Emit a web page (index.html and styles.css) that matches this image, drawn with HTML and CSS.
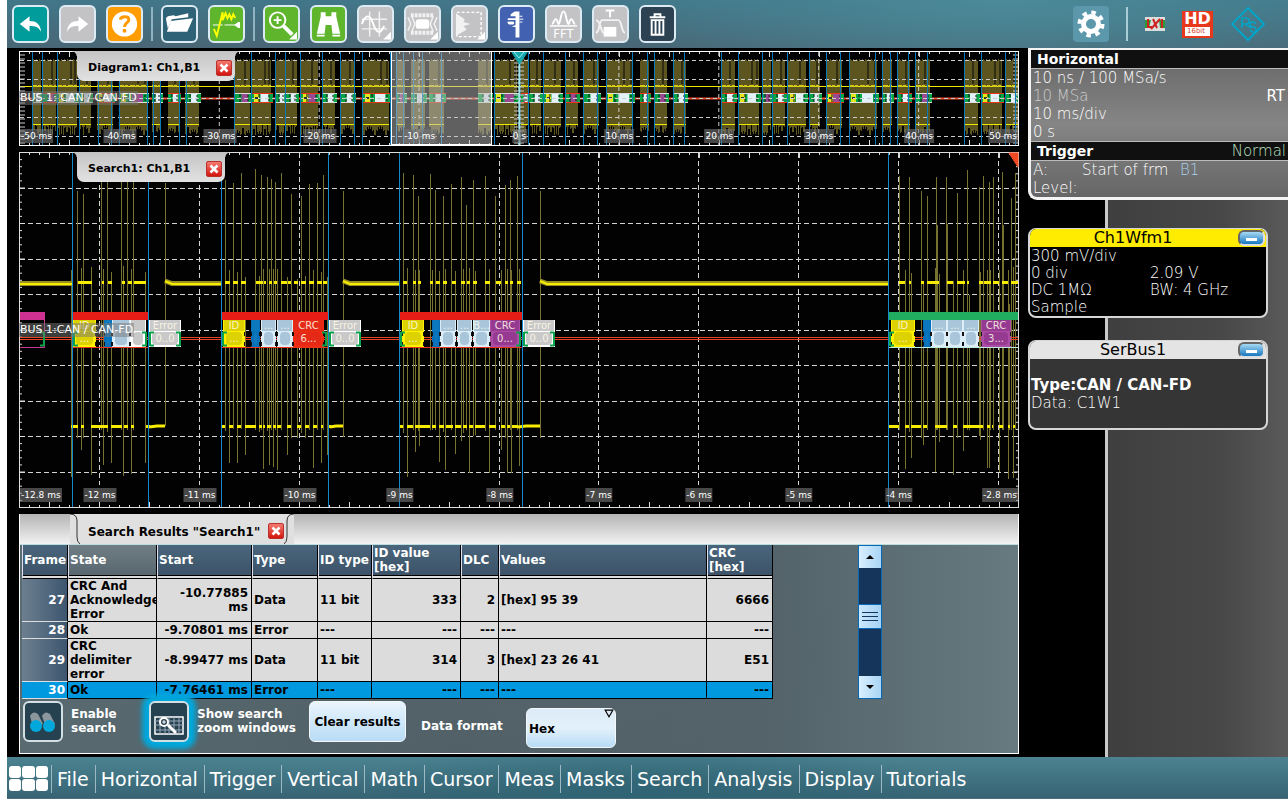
FILE: index.html
```html
<!DOCTYPE html>
<html lang="en">
<head>
<meta charset="utf-8">
<title>Oscilloscope</title>
<link rel="stylesheet" href="styles.css">
</head>
<body>
<div class="app">
  <header class="toolbar">
    <div class="tools">
      <button class="tool teal" aria-label="Undo"><svg viewBox="0 0 34 34"><path d="M6 17 16 9v5c7 0 11 3 12 11-3-5-6-6-12-6v6z" fill="#fff"/></svg></button>
      <button class="tool grey" aria-label="Redo"><svg viewBox="0 0 34 34"><path d="M28 17 18 9v5C11 14 7 17 6 25c3-5 6-6 12-6v6z" fill="#fff"/></svg></button>
      <button class="tool orange" aria-label="Help"><svg viewBox="0 0 34 34"><circle cx="17" cy="17" r="13" fill="#fff"/><path d="M12.500 12.500c1-4 9-4 9 0 0 3-4.500 3.500-4.500 7.500" fill="none" stroke="#f90" stroke-width="3"/><circle cx="17" cy="24" r="2" fill="#f90"/></svg></button>
    </div>
    <span class="sep"></span>
    <div class="tools">
      <button class="tool dark" aria-label="Open"><svg viewBox="0 0 34 34"><path d="M3 11l2-2 6-1 2 1 13-3v4L9 12 5 22z" fill="#fff"/><path d="M8 14 31 11l-6 14H4z" fill="#fff"/></svg></button>
      <button class="tool green" aria-label="Auto set"><svg viewBox="0 0 34 34"><path d="M3 18h10M15 18h11" stroke="#fff" stroke-width="1"/><path d="m25 18 4-3h2v6h-2z" fill="#fff"/><path d="M4 22l3 7 2-8 4-16v8l3-7 2 5 2-4 2 5 2-5 2 4" fill="none" stroke="#ff0" stroke-width="2"/></svg></button>
    </div>
    <span class="sep"></span>
    <div class="tools">
      <button class="tool green" aria-label="Zoom"><svg viewBox="0 0 34 34"><circle cx="13" cy="13" r="8" fill="none" stroke="#fff" stroke-width="2"/><path d="M13 9v8M9 13h8" stroke="#fff" stroke-width="2"/><path d="m19 19 9 9" stroke="#fff" stroke-width="4"/><path d="M33 25v8h-8z" fill="#fff"/></svg></button>
      <button class="tool green" aria-label="Search"><svg viewBox="0 0 34 34"><path d="M9 5h5v4h6V5h5v4l4 18h-8l-1-9h-6l-1 9H5L9 9z" fill="#fff"/><path d="M5 28h8v2H5zM21 28h8v2h-8z" fill="#fff"/></svg></button>
      <button class="tool grey" aria-label="Cursor"><svg viewBox="0 0 34 34"><path d="M11 4v26M21 4v26M3 12h26M3 22h26" stroke="#f2f2f2" stroke-width="1.500"/><path d="M3 17c2-6 5-9 8-7 4 3 4 14 9 15 3 1 4-3 6-6" fill="none" stroke="#fff" stroke-width="2"/><path d="M33 25v8h-8z" fill="#fff"/></svg></button>
      <button class="tool grey" aria-label="Mask"><svg viewBox="0 0 34 34"><path d="M5 8h24M5 26h24" stroke="#f2f2f2" stroke-width="4" stroke-dasharray="3 1"/><path d="M6 9l3 8-3 8M28 9l-3 8 3 8M2 10l3 7-3 7M32 10l-3 7 3 7" fill="none" stroke="#f2f2f2" stroke-width="1.500"/><rect x="10" y="12" width="14" height="10" rx="3" fill="#fff"/><path d="M33 25v8h-8z" fill="#fff"/></svg></button>
      <button class="tool grey" aria-label="Histogram"><svg viewBox="0 0 34 34"><rect x="4" y="5" width="25" height="25" fill="none" stroke="#fff" stroke-width="1.500" stroke-dasharray="3 2"/><path d="M3 6l9 6-1 3 7 2-7 2 3 4-11 6z" fill="#f2f2f2"/><path d="M33 25v8h-8z" fill="#fff"/></svg></button>
      <button class="tool blue" aria-label="Measure"><svg viewBox="0 0 34 34"><path d="M15 4h5v27h-4V20h-4l4-2v-5H8v-2h8V9h-5V7z" fill="#fff"/><path d="M8 15h6v2H9zM20 9h3M20 12h4M20 15h3" stroke="#fff" fill="#fff"/></svg></button>
      <button class="tool grey" aria-label="FFT"><svg viewBox="0 0 34 34"><path d="M3 19h28" stroke="#fff" stroke-width="1.500"/><path d="M5 17c2 0 2-5 4-5s2 5 3 5c2 0 2-13 5-13s3 13 5 13c1 0 1-5 3-5s2 5 4 5" fill="none" stroke="#fff" stroke-width="2"/><text x="17" y="31" text-anchor="middle" class="icon-text">FFT</text></svg></button>
      <button class="tool grey" aria-label="Trigger"><svg viewBox="0 0 34 34"><path d="M2 26c4 0 3-12 6-13h17c4 0 3 13 7 13M2 13c5 0 5 13 8 13" fill="none" stroke="#f2f2f2" stroke-width="2"/><rect x="10" y="20" width="13" height="10" fill="#fff"/><path d="M12 3h9M16.500 3v7" stroke="#fff" stroke-width="2"/></svg></button>
      <button class="tool navy" aria-label="Delete"><svg viewBox="0 0 34 34"><path d="M14 9V7h6v2M9 10h16" stroke="#fff" stroke-width="2" fill="none"/><path d="M11 13h12v15H11zM15 13v15M19 13v15" stroke="#fff" stroke-width="2" fill="none"/></svg></button>
    </div>
    <div class="status">
      <button class="gear" aria-label="Settings"><svg viewBox="0 0 36 36"><circle cx="18" cy="18" r="7.500" fill="none" stroke="#fff" stroke-width="5"/><circle cx="18" cy="18" r="11.500" fill="none" stroke="#fff" stroke-width="4" stroke-dasharray="4.500 4.530"/></svg></button>
      <span class="sep light"></span>
      <svg class="lxi" viewBox="0 0 20 14"><rect width="20" height="14" fill="#ddd"/><path d="M0 3h6l-2 8H0zM14 3h6v8h-5z" fill="#2a9a3c"/><path d="M3 2v8h4M6 12l9-10M8 2l4 9M17 2v9" stroke="#c22" stroke-width="2" fill="none"/></svg>
      <span class="hd"><b>HD</b><small>16bit</small></span>
      <svg class="logo" viewBox="0 0 36 36"><path d="M18 2 34 18 18 34 2 18z" fill="none" stroke="#00a5c8" stroke-width="2"/><path d="M12 22V12h4q3 0 3 3t-3 3h-4m3 0 6 4M26 18q-1-2-3-2-3 0-3 2.500t3 2.500 3 3-3 2-3-2" fill="none" stroke="#00a5c8" stroke-width="1.500"/></svg>
    </div>
  </header>

  <main class="work">
    <section class="stage">
      <div class="plot overview" id="overview">
        <div class="tab">Diagram1: Ch1,B1 <button class="close" aria-label="Close"><svg viewBox="0 0 16 16"><path d="m4 4 8 8M12 4l-8 8"/></svg></button></div>
      </div>
      <div class="plot detail" id="detail">
        <div class="tab">Search1: Ch1,B1 <button class="close" aria-label="Close"><svg viewBox="0 0 16 16"><path d="m4 4 8 8M12 4l-8 8"/></svg></button></div>
      </div>
      <section class="results">
        <div class="strip"><div class="strip-edge"></div>
          <svg class="curve" viewBox="0 0 10 30"><path d="M0 0q7 0 7 7v16q0 5 3 7" class="stroke"/></svg>
          <h2>Search Results "Search1"</h2>
          <button class="close" aria-label="Close"><svg viewBox="0 0 16 16"><path d="m4 4 8 8M12 4l-8 8"/></svg></button>
          <svg class="curve" viewBox="0 0 10 30"><path d="M10 0Q3 0 3 7v16q0 5-3 7" class="stroke"/></svg>
          <div class="strip-edge grow"></div>
        </div>
        <div class="grid">
          <table>
            <colgroup><col class="c46"><col class="c89"><col class="c95"><col class="c66"><col class="c54"><col class="c89"><col class="c38"><col class="c208"><col class="c66"></colgroup>
            <thead><tr><th>Frame</th><th class="sorted">State</th><th>Start</th><th>Type</th><th>ID type</th><th>ID value<br>[hex]</th><th>DLC</th><th>Values</th><th>CRC<br>[hex]</th></tr></thead>
            <tbody>
              <tr class="tall"><th>27</th><td>CRC And Acknowledge Error</td><td class="num">-10.77885 ms</td><td>Data</td><td>11 bit</td><td class="num">333</td><td class="num">2</td><td>[hex] 95 39</td><td class="num">6666</td></tr>
              <tr><th>28</th><td>Ok</td><td class="num">-9.70801 ms</td><td>Error</td><td>---</td><td class="num">---</td><td class="num">---</td><td>---</td><td class="num">---</td></tr>
              <tr class="tall"><th>29</th><td>CRC delimiter error</td><td class="num">-8.99477 ms</td><td>Data</td><td>11 bit</td><td class="num">314</td><td class="num">3</td><td>[hex] 23 26 41</td><td class="num">E51</td></tr>
              <tr class="selected"><th>30</th><td>Ok</td><td class="num">-7.76461 ms</td><td>Error</td><td>---</td><td class="num">---</td><td class="num">---</td><td>---</td><td class="num">---</td></tr>
            </tbody>
          </table>
          <div class="scroll">
            <button aria-label="Scroll up"><svg viewBox="0 0 22 22"><path d="M7 13h8l-4-4z"/></svg></button>
            <div class="track"><div class="thumb"><i></i><i></i><i></i></div></div>
            <button aria-label="Scroll down"><svg viewBox="0 0 22 22"><path d="M7 9h8l-4 4z"/></svg></button>
          </div>
        </div>
        <div class="controls">
          <button class="toggle" id="enable" aria-labelledby="enable-l"><svg viewBox="0 0 36 36"><path d="M5 12q3-6 8-2l5 10-10 3z" fill="#8b979d"/><path d="M17 12q3-6 8-2l5 10-9 3z" fill="#8b979d"/><circle cx="11" cy="22" r="6" fill="#00a8dc"/><circle cx="24" cy="22" r="6" fill="#00a8dc"/></svg></button>
          <label class="l1" id="enable-l" for="enable">Enable<br>search</label>
          <button class="toggle on" id="zoomwin" aria-labelledby="zoom-l"><svg viewBox="0 0 36 36"><path d="M4 13h28v17H4z" fill="none" stroke="#fff" stroke-width="1.500"/><path d="M4 17h28M4 21h28M4 26h28M9 13v17M14 13v17M18 13v17M23 13v17M28 13v17" fill="none" stroke="#9ab"/><circle cx="13" cy="18" r="4" fill="#26414f" stroke="#fff" stroke-width="2"/><path d="M13 16v4M11 18h4" stroke="#fff"/><path d="m17 21 8 8" stroke="#fff" stroke-width="3"/></svg></button>
          <label class="l2" id="zoom-l" for="zoomwin">Show search<br>zoom windows</label>
          <button class="clear">Clear results</button>
          <label class="l3" for="format">Data format</label>
          <span class="pick"><select id="format"><option>Hex</option></select><svg viewBox="0 0 9 9"><path d="M1 1h7l-3.500 6z"/></svg></span>
        </div>
      </section>
    </section>

    <aside class="side">
      <div class="info">
        <h3>Horizontal</h3>
        <div class="lines"><p>10 ns / 100 MSa/s</p><p class="split"><span class="dim">10 MSa</span><span class="bright">RT</span></p><p>10 ms/div</p><p>0 s</p></div>
        <h3>Trigger <span>Normal</span></h3>
        <div class="lines"><p class="trig"><span>A:</span><span>Start of frm</span><span class="source">B1</span></p><p>Level:</p></div>
      </div>
      <div class="card">
        <header class="yellow">Ch1Wfm1 <button class="min" aria-label="Minimize"></button></header>
        <div class="cols"><p>300 mV/div</p><p></p><p>0 div</p><p>2.09 V</p><p>DC 1MΩ</p><p>BW: 4 GHz</p><p>Sample</p></div>
      </div>
      <div class="card serial">
        <header>SerBus1 <button class="min" aria-label="Minimize"></button></header>
        <div class="body"><p class="strong">Type:CAN / CAN-FD</p><p>Data: C1W1</p></div>
      </div>
    </aside>
  </main>

  <nav class="menu">
    <button class="apps" aria-label="Applications"><i></i><i></i><i></i><i></i><i></i><i></i></button>
    <a href="#">File</a><a href="#">Horizontal</a><a href="#">Trigger</a><a href="#">Vertical</a><a href="#">Math</a><a href="#">Cursor</a><a href="#">Meas</a><a href="#">Masks</a><a href="#">Search</a><a href="#">Analysis</a><a href="#">Display</a><a href="#">Tutorials</a>
  </nav>
</div>
<script src="plots.js"></script>
</body>
</html>
```
FILE: styles.css
```css
* { box-sizing: border-box; }
body { margin: 0; background: #fff; font-family: "DejaVu Sans", Verdana, sans-serif; font-size: 12px; line-height: 14px; }
button { font: inherit; padding: 0; margin: 0; border: 0; background: none; cursor: pointer; }
p, h2, h3 { margin: 0; font-weight: inherit; font-size: inherit; }
svg { display: block; }
.app { margin-left: 7px; min-height: calc(100vh - 1px); display: flex; flex-direction: column; background: #000; }

.toolbar { height: 48px; display: flex; align-items: center; gap: 8px; padding: 0 22px 0 5px; background: radial-gradient(ellipse 420px 90px at 78% 0, #4b8a98, transparent), linear-gradient(#417789, #496675); }
.tools { display: flex; gap: 10px; }
.tool { width: 37px; height: 38px; border: 2px solid #dcebf3; border-radius: 6px; }
.tool svg { width: 100%; height: 100%; }
.teal { background: #009c9c; }
.grey { background: #c3c3c5; }
.orange { background: #ff9c00; }
.dark { background: #2e6377; }
.green { background: #5fb52c; }
.blue { background: #4261b0; }
.navy { background: #2c4252; }
.icon-text { font-size: 12px; fill: #fff; }
.sep { width: 2px; height: 34px; background: #8fb3c0; }
.sep.light { background: #a9cdd7; }
.status { margin-left: auto; display: flex; align-items: center; gap: 17px; }
.gear { width: 36px; height: 36px; border-radius: 4px; background: #5c98ab; }
.lxi { width: 20px; height: 14px; }
.hd { width: 31px; height: 27px; padding-top: 1px; background: #e8381c; color: #fff; display: flex; flex-direction: column; align-items: center; gap: 1px; }
.hd b { font-size: 16px; line-height: 14px; }
.hd small { width: 25px; background: #fff; color: #d8452e; font-size: 7px; line-height: 9px; padding-left: 2px; }
.logo { width: 36px; height: 36px; }

.work { flex: 1; display: flex; gap: 9px; }
.stage { flex: 1; min-width: 0; display: flex; flex-direction: column; gap: 6px; padding: 3px 0 3px 12px; }
.plot { position: relative; overflow: hidden; background: #020202; color: #fff; }
.plot > svg { width: 100%; height: 100%; }
.overview { height: 95px; }
.detail { height: 356px; }
.tag { position: absolute; font-size: 9px; line-height: 14px; padding: 0 1px; white-space: pre; }
.tag.axis { background: rgba(120, 120, 120, .6); transform: translateX(-50%); }
.tag.axis.first { transform: none; }
.tag.axis.last { transform: translateX(-100%); }
.tag.bus { font-size: 11px; color: #fff; background: rgba(120, 120, 120, .5); }
.tag.cell { font-size: 10px; line-height: 12px; text-align: center; transform: translateX(-50%); padding: 0; color: #fffbe8; opacity: .85; }
.tab { position: absolute; z-index: 1; left: 58px; top: 0; height: 30px; display: flex; align-items: center; gap: 16px; padding: 4px 3px 0 11px; border-radius: 0 0 7px 7px; background: linear-gradient(#c4c4c4, #e2e2e2); color: #000; font-size: 11px; font-weight: bold; white-space: nowrap; }
.tab::before, .tab::after { content: ""; position: absolute; top: 0; width: 5px; height: 5px; left: -5px; background: radial-gradient(circle at 0 100%, transparent 4px, #c4c4c4 5px); }
.tab::after { left: auto; right: -5px; background: radial-gradient(circle at 100% 100%, transparent 4px, #c4c4c4 5px); }
.close { width: 16px; height: 16px; border: 1px solid #b8322b; border-radius: 2px; background: linear-gradient(#f47a70, #d3150f); }
.close path { fill: none; stroke: #fff; stroke-width: 3; }

.results { flex: 1; display: flex; flex-direction: column; border: solid #fff; border-width: 0 1px 1px; background: radial-gradient(ellipse 330px 160px at 50% 60%, #56646a, transparent), linear-gradient(90deg, #596b71, #4e5e65 45%, #536369 75%, #667a80); }
.strip { height: 31px; display: flex; align-items: stretch; background: #e0e0e0; border-bottom: 1px solid #bdd; }
.strip-edge { width: 50px; background: linear-gradient(#b4b4b4, #f2f2f2); }
.grow { flex: 1; }
.curve { width: 10px; height: 30px; }
.curve .stroke { fill: none; stroke: #333; }
.strip h2 { font-weight: bold; margin: auto 0; padding: 5px 0 0 8px; }
.strip .close { margin: 9px 0 0 8px; }
.grid { display: flex; padding-left: 2px; }
table { width: 751px; table-layout: fixed; border-collapse: separate; border-spacing: 0; font-weight: bold; }
.c46 { width: 46px; } .c89 { width: 89px; } .c95 { width: 95px; } .c66 { width: 66px; } .c54 { width: 54px; } .c38 { width: 38px; } .c208 { width: 208px; }
th, td { padding: 0 2px; overflow: hidden; border: solid #000; border-width: 0 1px 1px 0; }
thead th { height: 34px; text-align: left; color: #fff; background: linear-gradient(#4a667c, #3b5167); border-left: 1px solid #dde; box-shadow: inset 0 -2px #ddd, inset 0 -3px #000; padding: 0 1px 3px; white-space: nowrap; }
thead .sorted { background: linear-gradient(#707d84, #56666e); }
tbody tr { height: 17px; background: #dcdcdc; }
tbody .tall { height: 43px; }
tbody th { text-align: right; color: #fff; background: linear-gradient(90deg, #6c7f90, #3d566f); border-bottom-color: #ddd; }
tbody .num { text-align: right; padding-right: 3px; }
tbody .selected, tbody .selected th { background: #0098de; }
.scroll { width: 24px; margin-left: 85px; display: flex; flex-direction: column; border: 1px solid #0868b8; }
.scroll button { width: 100%; height: 22px; background: linear-gradient(90deg, #d8efff, #a9d5f4); }
.track { flex: 1; background: #15355b; display: flex; flex-direction: column; justify-content: center; padding-bottom: 12px; }
.thumb { height: 25px; display: flex; flex-direction: column; align-items: center; justify-content: center; gap: 3px; border: solid #0868b8; border-width: 1px 0; background: linear-gradient(90deg, #cbe8fc, #a5d2f3); }
.thumb i { width: 16px; height: 1px; background: #17365c; }
.controls { flex: 1; display: flex; align-items: flex-start; padding: 2px 0 0 3px; color: #fff; font-weight: bold; white-space: nowrap; }
.toggle { width: 40px; height: 41px; border: 2px solid #d4dfe4; border-radius: 6px; background: #26414f; }
.toggle.on { box-shadow: 0 0 5px 7px #00a8dc; position: relative; }
.l1 { width: 78px; margin: 6px 0 0 8px; }
.l2 { width: 112px; margin: 6px 0 0 8px; }
.l3 { width: 105px; margin: 18px 0 0 15px; }
.clear { width: 97px; height: 41px; border-radius: 6px; border: 1px solid #f2f8fc; background: linear-gradient(#e9f4fd, #b8dcf5); font-weight: bold; }
.pick { position: relative; margin-top: 7px; }
.pick select { appearance: none; width: 90px; height: 40px; padding: 2px 2px 0; border-radius: 6px; border: 1px solid #f2f8fc; background: linear-gradient(#dcebf7, #e3f1fb 50%, #b8dcf5); font: inherit; color: #000; }
.pick svg { position: absolute; right: 2px; top: 1px; width: 10px; height: 10px; fill: none; stroke: #000; pointer-events: none; }

.side { width: 260px; color: #fff; font-size: 15px; background: linear-gradient(90deg, #000 77px, #c8c8c8 77px, #c8c8c8 80px, #3f3f3f 80px, #484848 75%, #5a5a5a); }
.info { border: solid #f4f4f4; border-width: 2px 0 3px 3px; border-radius: 0 0 0 9px; background: linear-gradient(#666, #858585 50%, #666); overflow: hidden; }
.info h3 { display: flex; justify-content: space-between; padding: 0 2px 0 6px; font-size: 14px; line-height: 18px; font-weight: bold; background: #101010; border-bottom: 1px solid #bbb; }
.info h3:nth-of-type(2) { border-top: 1px solid #bbb; }
.info h3 span { font-weight: 200; font-size: 15px; color: #bfe3c4; }
.lines { line-height: 18px; font-weight: 200; padding: 0 3px 0 2px; }
.split { display: flex; justify-content: space-between; }
.dim { color: #ccc; }
.bright { font-weight: 400; }
.trig { display: grid; grid-template-columns: 49px 98px 1fr; }
.source { color: #a6d3ee; }
.card { width: 240px; height: 90px; margin-top: 28px; border: 2px solid #d6d6d6; border-top-width: 1px; border-radius: 8px; background: #000; overflow: hidden; font-weight: 200; line-height: 17px; }
.card + .card { margin-top: 22px; }
.card header { display: flex; justify-content: center; position: relative; height: 18px; padding-right: 30px; line-height: 18px; font-size: 16px; font-weight: 400; color: #000; background: #e4e4e4; }
.card .yellow { background: #ffec00; }
.min { position: absolute; right: 1px; top: 1px; width: 27px; height: 16px; border: 2px solid #666; border-right-color: #ddd; border-bottom-color: #ddd; border-radius: 6px; background: linear-gradient(#fff, #fff) center 6px / 11px 3px no-repeat, linear-gradient(#a8daf5, #1678bf); }
.cols { display: grid; grid-template-columns: 119px 1fr; padding: 1px 0 0 1px; }
.serial { background: #353535; }
.body { padding: 17px 0 0 1px; line-height: 18px; }
.strong { font-weight: bold; }

.menu { height: 42px; display: flex; align-items: center; padding: 2px 2px 0; background: radial-gradient(ellipse 300px 60px at 50% 100%, #2f6474, transparent), linear-gradient(#4b8391, #376474); border-bottom: 1px solid #4b6e7d; }
.apps { width: 39px; display: grid; grid-template-columns: repeat(3, 1fr); gap: 1px; margin-right: 3px; }
.apps i { height: 12px; border-radius: 3px; background: #fff; }
.menu a { padding: 0 6px 0 5px; border-left: 1px solid #9dbac4; font-size: 19px; line-height: 28px; color: #fff; text-decoration: none; }
```
FILE: plots.js
```js
const NS = 'http://www.w3.org/2000/svg';

function surface(id, x, y, w, h) {
  const host = document.getElementById(id);
  const svg = document.createElementNS(NS, 'svg');
  svg.setAttribute('viewBox', `${x} ${y} ${w} ${h}`);
  svg.setAttribute('preserveAspectRatio', 'none');
  host.prepend(svg);
  const add = (tag, attrs) => {
    const el = document.createElementNS(NS, tag);
    for (const k in attrs) el.setAttribute(k, attrs[k]);
    svg.append(el);
  };
  return {
    rect: (a, b, c, d, fill, more) => add('rect', { x: a, y: b, width: c, height: d, fill, ...more }),
    path: (d, stroke, width = 1, more) => add('path', { d, stroke, 'stroke-width': width, fill: 'none', ...more }),
    tag: (a, b, text, cls) => {
      const el = document.createElement('span');
      el.className = 'tag ' + cls;
      el.textContent = text;
      el.style.left = (a - x) / w * 100 + '%';
      el.style.top = b - y + 'px';
      host.append(el);
    }
  };
}

/* Overview diagram */
const o = surface('overview', 19, 51, 1000, 95);
const blocks = [[32,41],[43,56],[57,77],[79,91],[97,113],[119,147],[152,161],[168,179],[185,199],[235,250],[252,271],[276,285],[286,297],[301,318],[322,335],[341,354],[363,389],[396,405],[411,425],[429,444],[478,491],[494,517],[521,528],[530,541],[544,561],[565,578],[584,599],[606,633],[640,649],[655,667],[673,686],[721,735],[738,759],[762,771],[773,785],[788,806],[810,820],[826,842],[849,877],[883,892],[897,910],[916,930],[964,978],[981,1002],[1006,1018]];
const marks = [32,42,57,79,98,111,119,147,153,160,179,186,234,251,275,285,300,322,340,354,362,390,396,403,413,422,441,494,528,543,565,583,597,606,632,647,654,673,684,721,738,762,772,787,809,826,840,849,875,882,890,897,908,915,927,964,981,1005,1015];

blocks.forEach(([a, b], n) => {
  let d = `M${a} 60`;
  for (let x = a; x < b; x++) d += `V${59 + (x * 7 + n) % 3}H${x + 1}`;
  for (let x = b; x > a; x--) d += `V${125 + (x * 13 + x * x * 3 + n) % 11}H${x - 1}`;
  o.path(d + 'Z', 'none', 0, { fill: '#5c5520' });
  if (b - a > 9) o.path(`M${a + (b - a) * 7 / 10 | 0} 61v23`, '#090909');
  if (b - a > 18) o.path(`M${b - 2} 61v23`, '#090909');
});
o.path('M20 86.500H1018', '#efe600', 1);
o.path('M20 98.500H1018', '#ee4a28', 2);
blocks.forEach(([a, b], n) => {
  o.path(`M${a} 86H${b}`, '#d4ca18', 2, { 'stroke-dasharray': '5 1 3 2' });
  o.path(`M${a} 124.500H${b}`, '#efe600');
  const w = b - a + 2;
  o.rect(a, 93, w, 10, '#06a646');
  o.rect(a, 93, w, 1, ['#ddd', '#ee351b', '#ddd'][n % 3]);
  o.rect(a, 102, w, 1, ['#ddd', '#ee351b', '#ddd'][n % 3]);
  if (w > 17) { o.rect(a + 2, 94, 5, 8, '#e4e51c'); o.rect(a + 3, 97, 3, 2, '#333'); }
  o.rect(a + w / 2 - 2, 94, w / 3 + 1, 8, n % 4 === 1 ? '#984b91' : '#e2f2f8');
  o.path(`M${a + w / 3 | 0} 94v3m0 2v3M${b - 2} 95v2m0 2v2`, '#101010', 1);
});
o.path('M20 60.500H1018M20 79.500H1018M20 98.500H1018M20 117.500H1018M20 136.500H1018', '#ccc', 1, { 'stroke-dasharray': '4 3' });
let v = '', t = '';
for (let i = 1; i < 10; i++) v += `M${19.5 + i * 99.9} 52V145`;
for (let i = 0; i <= 100; i++) t += `M${19.5 + i * 10} 52v${i % 5 ? 2 : 5}M${19.5 + i * 10} 145v-${i % 5 ? 2 : 5}`;
o.path(v, '#ccc', 1, { 'stroke-dasharray': '4 3' });
o.path(t, '#ddd');
let l = '';
for (let y = 55; y < 145; y += 4) l += `M20 ${y}h5M519 ${y}m-5 0h10M1018 ${y}h-5`;
o.path(l, '#ccc');
o.path(marks.map(x => `M${x + .5} 52V145`).join(''), '#087abc');
o.rect(391.5, 51.5, 100, 93, 'rgba(190,190,190,.5)', { stroke: '#fff' });
o.path('M519.500 51V146', '#9ce8ec', 2);
o.path('M511 51h17l-8.500 13z', '#17a9ac', 1, { fill: '#17a9ac' });
o.path('m514 52 5 6 5-6', '#9ce8ec');
o.rect(19.5, 51.5, 999, 94, 'none', { stroke: '#fff' });
o.tag(19, 91, 'BUS 1: CAN / CAN-FD', 'bus');
['-50 ms','-40 ms','-30 ms','-20 ms','-10 ms','0 s','10 ms','20 ms','30 ms','40 ms','50 ms'].forEach((s, i) =>
  o.tag(i === 0 ? 20 : i === 10 ? 1018 : 20 + i * 99.9, 129, s, 'axis' + (i === 0 ? ' first' : i === 10 ? ' last' : '')));

/* Zoomed search window */
const z = surface('detail', 19, 152, 1000, 356);
const spikes = [
  [71,270,477],[77,191,438],[81,268,450],[83,194,438],[91,267,475],[101,170,430],[103,269,465],[107,172,432],[111,272,463],[121,172,430],[123,266,476],[127,171,430],[131,269,474],[133,170,430],[145,272,463],[165,183,426],
  [225,180,431],[229,270,463],[233,183,429],[237,272,463],[241,173,429],[245,277,455],[255,169,430],[259,276,432],[261,175,430],[263,269,469],[267,177,431],[269,269,465],[271,179,430],[273,269,467],[275,182,430],[277,269,470],[281,173,430],[287,277,455],[291,194,438],[297,279,438],[301,196,433],[305,276,438],[309,184,430],[313,270,468],[317,183,430],[321,272,463],[323,175,430],[327,277,455],[343,191,437],
  [403,173,433],[407,268,477],[413,175,430],[415,270,452],[418,196,431],[419,270,446],[430,174,430],[432,270,430],[435,190,430],[439,271,462],[443,196,432],[445,269,470],[451,184,430],[455,271,454],[461,177,441],[463,269,433],[466,205,430],[469,268,473],[473,180,436],[475,271,435],[485,176,431],[489,269,473],[495,196,430],[501,270,450],[505,185,438],[507,269,473],[510,180,430],[511,270,473],[517,176,430],[519,269,466],[540,191,438],
  [899,176,430],[905,270,469],[909,177,432],[911,273,458],[921,191,438],[923,281,445],[927,196,430],[935,268,472],[936,177,430],[937,225,430],[939,274,442],[946,177,430],[947,224,430],[953,281,475],[957,193,438],[963,270,451],[967,170,430],[969,295,430],[979,187,436],[980,272,440],[983,176,430],[987,270,468],[989,182,468],[990,270,430],[993,177,430],[999,270,472],[1002,172,430],[1003,225,430],[1008,270,479],[1009,304,430],[1011,198,430],[1013,267,478],[1015,173,430]
];
z.path([188.5,223.5,259.5,294.5,330.5,365.5,401.5,436.5,472.5].map(y => `M20 ${y}H1018`).join(''), '#d4d4d4', 1, { 'stroke-dasharray': '5 3' });
z.path([99.5,199.5,299.5,399.5,499.5,598.5,698.5,798.5,898.5,998.5].map(x => `M${x} 153V485`).join(''), '#d4d4d4', 1, { 'stroke-dasharray': '5 3' });
let ticks = '';
for (let i = 0; i < 100; i++) ticks += `M${19.5 + i * 10} 153v${(i + 2) % 5 ? 2 : 5}M${19.5 + i * 10} 507v-${(i + 2) % 5 ? 2 : 5}`;
for (let i = 0; i < 50; i++) ticks += `M20 ${152.5 + i * 7.1}h${i % 5 ? 2 : 5}M1018 ${152.5 + i * 7.1}h-${i % 5 ? 2 : 5}`;
z.path(ticks, '#ddd');
z.path(spikes.map(s => `M${s[0] + .5} ${s[1]}V${s[2]}`).join(''), '#77722f');
z.path('M20 337.500H1018M20 339.500H1018', '#e84425');

const high = [[78,84],[84,92],[102,104],[108,112],[122,125],[128,132],[134,146],[225,230],[233,238],[241,246],[256,263],[264,266],[269,272],[274,277],[281,287],[288,291],[294,298],[301,306],[309,314],[317,322],[323,327],[403,407],[413,416],[418,421],[430,433],[436,440],[443,447],[452,456],[461,465],[467,470],[473,477],[485,490],[496,501],[505,508],[510,513],[517,521],[899,905],[909,911],[921,924],[927,939],[947,953],[957,965],[967,969],[979,983],[984,991],[993,999],[1002,1008],[1011,1018]];
const low = [[71,78],[81,84],[91,108],[111,122],[124,128],[131,134],[146,150],[222,225],[229,233],[237,241],[245,256],[259,262],[263,265],[267,271],[273,276],[277,281],[287,291],[297,301],[305,309],[313,317],[321,323],[328,331],[400,403],[407,413],[415,430],[432,436],[439,444],[446,453],[455,461],[463,467],[469,473],[475,485],[489,496],[501,505],[507,510],[512,518],[889,899],[905,909],[911,921],[923,927],[935,947],[953,957],[963,983],[987,990],[992,993],[999,1003],[1008,1010],[1013,1015]];
const seg = (list, y) => list.map(([a, b]) => `M${a} ${y}H${b}`).join('');
z.path(seg(high, 282.5) + seg(low, 426.5), '#f7eb00', 3);
z.path('M149 427l8-1h8M330 427l6-1h7M518 427l8-1h14', '#f7eb00', 3);
z.path('M20 283.500H72M165 281l7 2.500H221M343 281l7 2.500H399M540 281l7 2.500H888', '#989023', 5);
z.path('M20 284H72M165 281l7 3H221M343 281l7 3H399M540 281l7 3H888', '#f7eb00', 2);

const YEL = '#ded100', BLU = '#0c78bd', ICE = '#a9c5da', GRY = '#c9c9c9', RED = '#e52917', PUR = '#963a91';
const edge = { [YEL]: '#fff000', [BLU]: '#0870b8', [ICE]: '#dcedf8', [GRY]: '#fff', [RED]: '#f12a12', [PUR]: '#ac4da5' };
const groups = [
  [73,148,'#e51d16','#e8341f',[[73,96,YEL,'ID','...'],[104,112,BLU],[112,130,ICE,'',''],[130,146,GRY,'','']]],
  [222,328,'#e51d16','#e8341f',[[223,245,YEL,'ID','...'],[251,260,BLU],[261,276,ICE,'...',''],[277,293,ICE,'...',''],[293,324,RED,'CRC','6...']]],
  [400,522,'#e51d16','#e8341f',[[402,424,YEL,'ID','...'],[432,440,BLU],[440,456,ICE,'...',''],[457,472,ICE,'...',''],[473,490,ICE,'B...',''],[490,520,PUR,'CRC','0...']]],
  [889,1018,'#22ae61','#bfeadf',[[891,915,YEL,'ID','...'],[923,931,BLU],[931,947,ICE,'...',''],[947,963,ICE,'...',''],[963,979,ICE,'...',''],[981,1011,PUR,'CRC','3...']]]
];
z.rect(19, 312, 26, 8, '#cf3193');
z.path('M44.500 312V347.500H20', '#c73890');
const cell = ([a, b, color, top, bottom]) => {
  z.rect(a, 320, b - a, 27, edge[color]);
  z.rect(a + 1, 320, b - a - 2, 11, color);
  z.rect(a + 3, 332, b - a - 6, 13, color, { rx: 4 });
  z.path(`M${a + .5} 332v4m0 6v4M${b - .5} 332v4m0 6v4`, '#151515');
  const mid = (a + b) / 2;
  if (top) z.tag(mid, 320, top, 'cell');
  if (bottom) z.tag(mid, 333, bottom, 'cell');
};
const bracket = (x, dir) => z.path(`M${x} 332.500h${4 * dir}M${x} 332v14M${x} 345.500h${4 * dir}`, '#0aa24a', 2);
groups.forEach(([a, b, bar, line, cells], i) => {
  z.rect(a, 312, b - a, 8, bar);
  z.path(`M${a} 347.500H${b}`, line);
  cells.forEach(cell);
  bracket(a + 1, 1);
  if (i < 3) {
    bracket(b - 2, -1);
    cell([b + 1, b + 33, GRY, 'Error', '0..0']);
    bracket(b + 2, 1);
    bracket(b + 32, -1);
  }
});
bracket(44, -1);
z.path([72.5,148.5,221.5,328.5,399.5,522.5,888.5].map(x => `M${x} 153V507`).join(''), '#1488cc');
z.rect(19.5, 152.5, 999, 355, 'none', { stroke: '#ddd' });
z.path('M1009 153h9v14z', '#f04a24', 1, { fill: '#f04a24' });
z.tag(19, 323, 'BUS 1:CAN / CAN-FD', 'bus');
[[20,'-12.8 ms'],[100,'-12 ms'],[200,'-11 ms'],[300,'-10 ms'],[400,'-9 ms'],[500,'-8 ms'],[599,'-7 ms'],[699,'-6 ms'],[799,'-5 ms'],[899,'-4 ms'],[1018,'-2.8 ms']].forEach(([x, s], i) =>
  z.tag(x, 488, s, 'axis' + (i === 0 ? ' first' : i === 10 ? ' last' : '')));
```
